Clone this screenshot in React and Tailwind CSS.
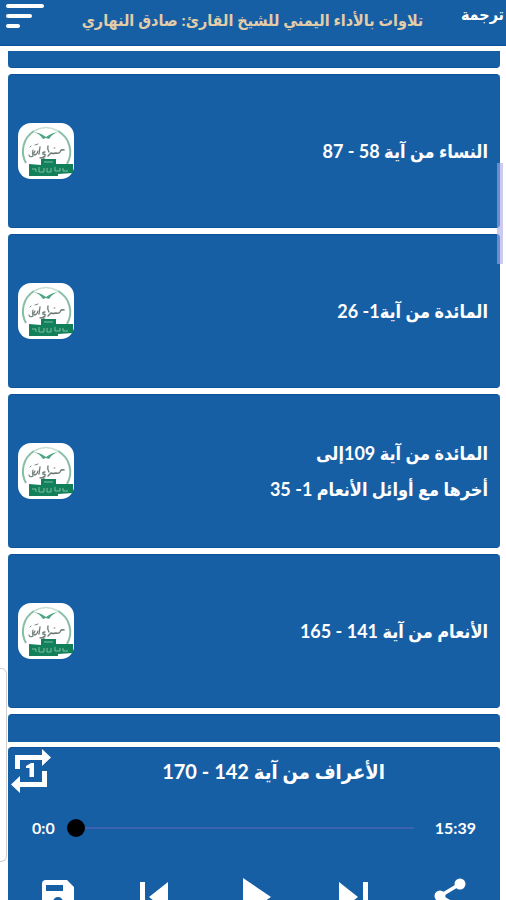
import React from "react";

const CARDS = [
  { lines: ["النساء من آية 58 - 87"] },
  { lines: ["المائدة من آية1- 26"] },
  { lines: ["المائدة من آية 109إلى", "أخرها مع أوائل الأنعام 1- 35"] },
  { lines: ["الأنعام من آية 141 - 165"] },
];

const CONTROLS = [
  {
    label: "حفظ",
    shape: (
      <path
        fillRule="evenodd"
        d="M4 2h21l7 7v22a4 4 0 0 1-4 4H4a4 4 0 0 1-4-4V6a4 4 0 0 1 4-4zM4 7v6h17V7zM16 19a5 5 0 1 0 0 10 5 5 0 0 0 0-10z"
      />
    ),
  },
  { label: "السابق", shape: <path d="M0 4h5v30H0zM28 4v30L9 19z" /> },
  { label: "تشغيل", shape: <path d="M5 0v38l28-19z" /> },
  { label: "التالي", shape: <path d="M27 4h5v30h-5zM3 4v30l19-15z" /> },
  {
    label: "مشاركة",
    shape: (
      <g>
        <path d="M26 6L6 18l20 12" fill="none" stroke="currentColor" strokeWidth="3.5" />
        <circle cx="26" cy="6" r="5.5" />
        <circle cx="6" cy="18" r="5.5" />
        <circle cx="26" cy="30" r="5.5" />
      </g>
    ),
  },
];

function Emblem() {
  return (
    <svg viewBox="0 0 56 56" className="size-14 shrink-0" aria-hidden="true">
      <rect width="56" height="56" rx="13" fill="#fff" />
      <path d="M8 40A24 24 0 0 1 16 8M40 8A24 24 0 0 1 49 41" fill="none" stroke="#86bda3" strokeWidth="2" />
      <path d="M16 8Q28 1 40 8" fill="none" stroke="#c3dfd2" strokeWidth="1.5" />
      <path d="M16 9q7 1 12 5q5-4 12-5q-6 2-9 7l-3-1-3 1q-3-5-9-7z" fill="#4fa57f" />
      <g fill="none" stroke="#6b7a72" strokeLinecap="round">
        <path d="M46 27q-3-1-4 2q-1 2-4 1q-3 1-5 0l-3 3" strokeWidth="1.4" />
        <path d="M30 23q-1 3 1 6M27 29q-3 0-2 2q3 0 2 2q-2 2-5 2M22 24l-1 7" strokeWidth="1.3" />
        <path d="M20 28q-1 4-4 4q-1-2 1-4M15 27q-1 4 0 6q-3 2-4-1" strokeWidth="1.1" />
        <path d="M17 22l3-1M36 25h1M24 36l3-1M12 24l1-1" strokeWidth="0.9" />
      </g>
      <path d="M23 36h15v5h17v9l-15 1v2H11V41l12 1z" fill="#12805a" />
      <path d="M26 39h9M14 46h4v3M21 44v5h5v-4M29 45v4h4v-4M37 44v4h5v-3M45 45v3h5" fill="none" stroke="#8cc5aa" strokeWidth="0.9" />
    </svg>
  );
}

function Card({ lines }) {
  return (
    <li className="flex h-[154px] shrink-0 items-center justify-between rounded border-y border-[#0d519f] bg-[#175fa5] pr-3 pl-2.5">
      <p className="text-lg leading-9 font-bold text-white">
        {lines.map((line) => (
          <span key={line} className="block">{line}</span>
        ))}
      </p>
      <Emblem />
    </li>
  );
}

export default function App() {
  return (
    <div
      dir="rtl"
      className="relative flex h-screen flex-col overflow-hidden bg-white font-[Lato,'DejaVu_Sans_Condensed','DejaVu_Sans',sans-serif]"
    >
      <header className="flex h-[46px] shrink-0 items-start justify-between border-b border-[#0d519f] bg-[#175fa5] pr-0.5 pl-1.5">
        <button type="button" className="pt-0.5 text-base leading-6 font-bold text-white">ترجمة</button>
        <h1 className="pt-1 text-base leading-8 font-bold text-[#e2cda8]">تلاوات بالأداء اليمني للشيخ القارئ: صادق النهاري</h1>
        <button type="button" aria-label="القائمة" className="flex flex-col items-end gap-1.5 pt-1">
          <span className="h-1 w-[38px] rounded-xs bg-white" />
          <span className="h-1 w-[26px] rounded-xs bg-white" />
          <span className="h-1 w-[14px] rounded-xs bg-white" />
        </button>
      </header>

      <ul className="mt-[5px] mr-1.5 ml-2 flex min-h-0 flex-1 flex-col gap-1.5 overflow-hidden">
        <li className="h-[17px] shrink-0 rounded-b border-b border-[#0d519f] bg-[#175fa5]" />
        {CARDS.map((card) => (
          <Card key={card.lines[0]} lines={card.lines} />
        ))}
        <li className="h-[154px] shrink-0 rounded-t border-t border-[#0d519f] bg-[#175fa5]" />
      </ul>

      <section className="mt-[5px] mr-1.5 ml-2 h-[153px] shrink-0 overflow-hidden rounded-t border-t border-[#0d519f] bg-[#175fa5] text-white">
        <div className="grid grid-cols-[40px_1fr_40px] items-center pl-[3px]">
          <h2 className="col-start-2 pl-9 text-center text-xl leading-[46px] font-bold">الأعراف من آية 142 - 170</h2>
          <button type="button" aria-label="تكرار" className="justify-self-end">
            <svg viewBox="0 0 40 44" className="h-11 w-10" fill="currentColor">
              <path d="M4 6h27V0l9 8.500-9 8.500v-6H9v9H4zM36 38H9v6l-9-8.500 9-8.500v6h22V22h5z" />
              <path d="M15 17l5-3h3v14h-4.500v-9H15z" />
            </svg>
          </button>
        </div>
        <div dir="ltr" className="flex h-[68px] items-center px-6 text-base font-bold">
          <span>0:0</span>
          <input
            type="range"
            aria-label="موضع التشغيل"
            min="0"
            max="939"
            defaultValue="0"
            className="mx-3 h-[18px] min-w-0 flex-1 appearance-none bg-[linear-gradient(#3a62b0,#3a62b0)] bg-[length:calc(100%-18px)_2px] bg-center bg-no-repeat [&::-webkit-slider-thumb]:size-[18px] [&::-webkit-slider-thumb]:appearance-none [&::-webkit-slider-thumb]:rounded-full [&::-webkit-slider-thumb]:bg-black"
          />
          <span>15:39</span>
        </div>
        <div dir="ltr" className="flex justify-between px-[34px] pt-4">
          {CONTROLS.map(({ label, shape }) => (
            <button key={label} type="button" aria-label={label}>
              <svg viewBox="0 0 32 40" className="h-10 w-8 overflow-visible" fill="currentColor">{shape}</svg>
            </button>
          ))}
        </div>
      </section>

      <div className="absolute top-[163px] right-[3px] h-[101px] w-1.5 bg-[#a9a9e6]/60" />
      <div className="absolute top-[668px] left-0 h-[194px] w-[7px] rounded-r-md border-y border-r border-[#cfcfcf] bg-white" />
    </div>
  );
}
